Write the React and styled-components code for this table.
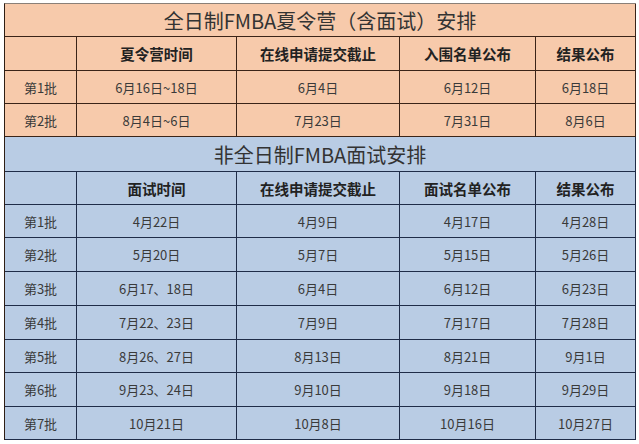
import React from "react";
import styled, { createGlobalStyle } from "styled-components";

const Global = createGlobalStyle`
  html, body { margin: 0; padding: 0; background: #ffffff; }
  body { font-family: "Noto Sans CJK SC", "Noto Sans", sans-serif; }
`;

const Page = styled.div`
  padding: 3px 0 0 4px;
  width: 639px;
  height: 444px;
  box-sizing: border-box;
`;

const Sheet = styled.div`
  width: 632px;
  border-top: 1px solid #8a8078;
  border-left: 1px solid #2e1e14;
  box-sizing: border-box;
`;

const Section = styled.div`
  display: grid;
  grid-template-columns: 72px 160px 163px 136px 100px;
  grid-template-rows: ${(p) => p.$rows};
  background: ${(p) => p.$bg};
  --line: ${(p) => p.$line};
`;

const Cell = styled.div`
  display: flex;
  align-items: center;
  justify-content: center;
  border-right: 1px solid var(--line);
  border-bottom: 1px solid var(--line);
  box-sizing: border-box;
  font-size: 13px;
  color: #3a3a3a;
  white-space: nowrap;
`;

const Title = styled(Cell)`
  grid-column: 1 / -1;
  font-size: 20px;
  color: #333;
  padding-top: 1px;
`;

const Head = styled(Cell)`
  font-size: 14.5px;
  font-weight: 700;
  color: #222;
`;

const summer = {
  title: "全日制FMBA夏令营（含面试）安排",
  head: ["", "夏令营时间", "在线申请提交截止", "入围名单公布", "结果公布"],
  rows: [
    ["第1批", "6月16日~18日", "6月4日", "6月12日", "6月18日"],
    ["第2批", "8月4日~6日", "7月23日", "7月31日", "8月6日"],
  ],
};

const part = {
  title: "非全日制FMBA面试安排",
  head: ["", "面试时间", "在线申请提交截止", "面试名单公布", "结果公布"],
  rows: [
    ["第1批", "4月22日", "4月9日", "4月17日", "4月28日"],
    ["第2批", "5月20日", "5月7日", "5月15日", "5月26日"],
    ["第3批", "6月17、18日", "6月4日", "6月12日", "6月23日"],
    ["第4批", "7月22、23日", "7月9日", "7月17日", "7月28日"],
    ["第5批", "8月26、27日", "8月13日", "8月21日", "9月1日"],
    ["第6批", "9月23、24日", "9月10日", "9月18日", "9月29日"],
    ["第7批", "10月21日", "10月8日", "10月16日", "10月27日"],
  ],
};

function Block({ data, bg, line, rows }) {
  return (
    <Section $bg={bg} $line={line} $rows={rows}>
      <Title>{data.title}</Title>
      {data.head.map((h, i) => (
        <Head key={"h" + i}>{h}</Head>
      ))}
      {data.rows.map((r, ri) =>
        r.map((c, ci) => <Cell key={ri + "-" + ci}>{c}</Cell>)
      )}
    </Section>
  );
}

export default function App() {
  return (
    <>
      <Global />
      <Page>
        <Sheet>
          <Block
            data={summer}
            bg="#f7caab"
            line="#3b2418"
            rows="33px 34px 33px 33px"
          />
          <Block
            data={part}
            bg="#b9cce4"
            line="#1f2c48"
            rows="35px 33px 33px 34px 34px 34px 33px 34px 33px"
          />
        </Sheet>
      </Page>
    </>
  );
}
